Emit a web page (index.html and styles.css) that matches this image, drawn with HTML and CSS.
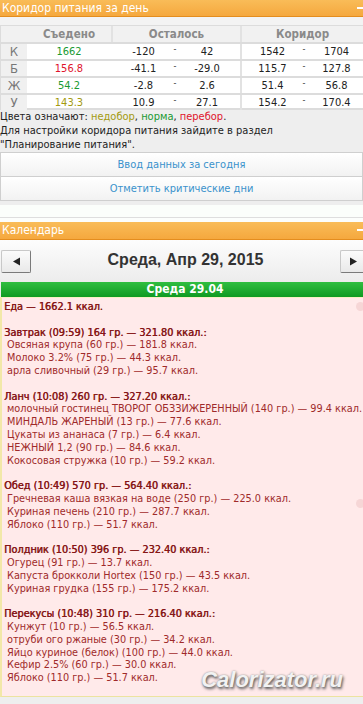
FILE: index.html
```html
<!DOCTYPE html>
<html lang="ru">
<head>
<meta charset="utf-8">
<title>Калоризатор</title>
<link rel="stylesheet" href="styles.css">
</head>
<body>
<div class="page">
  <section class="panel">
    <div class="bar"><span class="bar-title">Коридор питания за день</span><span class="min"></span></div>
    <div class="gap"></div>
    <div class="corr">
      <div class="row head"><span class="let"></span><span class="eat">Съедено</span><span class="grp sep">Осталось</span><span class="grp2 sep">Коридор</span></div>
      <div class="row"><span class="let">К</span><span class="eat ok">1662</span><span class="a">-120</span><span class="d">-</span><span class="b">42</span><span class="c sep">1542</span><span class="d">-</span><span class="f">1704</span></div>
      <div class="row"><span class="let">Б</span><span class="eat over">156.8</span><span class="a">-41.1</span><span class="d">-</span><span class="b">-29.0</span><span class="c sep">115.7</span><span class="d">-</span><span class="f">127.8</span></div>
      <div class="row"><span class="let">Ж</span><span class="eat ok">54.2</span><span class="a">-2.8</span><span class="d">-</span><span class="b">2.6</span><span class="c sep">51.4</span><span class="d">-</span><span class="f">56.8</span></div>
      <div class="row last"><span class="let">У</span><span class="eat under">143.3</span><span class="a">10.9</span><span class="d">-</span><span class="b">27.1</span><span class="c sep">154.2</span><span class="d">-</span><span class="f">170.4</span></div>
    </div>
    <p class="legend">Цвета означают: <span class="under">недобор</span>, <span class="ok">норма</span>, <span class="over">перебор</span>.<br>Для настройки коридора питания зайдите в раздел<br>"Планирование питания".</p>
    <a class="btn" href="#">Ввод данных за сегодня</a>
    <a class="btn second" href="#">Отметить критические дни</a>
    <div class="panel-foot"></div>
    <div class="panel-foot2"></div>
  </section>

  <section class="panel cal">
    <div class="bar cal-bar"><span class="bar-title">Календарь</span><span class="min"></span></div>
    <div class="nav">
      <button class="navbtn" type="button"><svg width="9" height="9" viewBox="0 0 9 9"><polygon points="1,4.5 8,0.5 8,8.5" fill="#222"/></svg></button>
      <div class="date">Среда, Апр 29, 2015</div>
      <button class="navbtn next" type="button"><svg width="9" height="9" viewBox="0 0 9 9"><polygon points="8,4.5 1,0.5 1,8.5" fill="#222"/></svg></button>
    </div>
    <div class="day">Среда 29.04</div>
    <div class="food">
      <span class="apple a1"></span>
      <span class="apple a2"></span>
      <div class="h">Еда — 1662.1 ккал.</div>
      <div class="blank"></div>
      <div class="h">Завтрак (09:59) 164 гр. — 321.80 ккал.:</div>
      <div class="i">Овсяная крупа (60 гр.) — 181.8 ккал.</div>
      <div class="i">Молоко 3.2% (75 гр.) — 44.3 ккал.</div>
      <div class="i">арла сливочный (29 гр.) — 95.7 ккал.</div>
      <div class="blank"></div>
      <div class="h">Ланч (10:08) 260 гр. — 327.20 ккал.:</div>
      <div class="i">молочный гостинец ТВОРОГ ОБЗЗИЖЕРЕННЫЙ (140 гр.) — 99.4 ккал.</div>
      <div class="i">МИНДАЛЬ ЖАРЕНЫЙ (13 гр.) — 77.6 ккал.</div>
      <div class="i">Цукаты из ананаса (7 гр.) — 6.4 ккал.</div>
      <div class="i">НЕЖНЫЙ 1,2 (90 гр.) — 84.6 ккал.</div>
      <div class="i">Кокосовая стружка (10 гр.) — 59.2 ккал.</div>
      <div class="blank"></div>
      <div class="h">Обед (10:49) 570 гр. — 564.40 ккал.:</div>
      <div class="i">Гречневая каша вязкая на воде (250 гр.) — 225.0 ккал.</div>
      <div class="i">Куриная печень (210 гр.) — 287.7 ккал.</div>
      <div class="i">Яблоко (110 гр.) — 51.7 ккал.</div>
      <div class="blank"></div>
      <div class="h">Полдник (10:50) 396 гр. — 232.40 ккал.:</div>
      <div class="i">Огурец (91 гр.) — 13.7 ккал.</div>
      <div class="i">Капуста брокколи Hortex (150 гр.) — 43.5 ккал.</div>
      <div class="i">Куриная грудка (155 гр.) — 175.2 ккал.</div>
      <div class="blank"></div>
      <div class="h">Перекусы (10:48) 310 гр. — 216.40 ккал.:</div>
      <div class="i">Кунжут (10 гр.) — 56.5 ккал.</div>
      <div class="i">отруби ого ржаные (30 гр.) — 34.2 ккал.</div>
      <div class="i">Яйцо куриное (белок) (100 гр.) — 44.0 ккал.</div>
      <div class="i">Кефир 2.5% (60 гр.) — 30.0 ккал.</div>
      <div class="i">Яблоко (110 гр.) — 51.7 ккал.</div>
      <div class="watermark">Calorizator.ru</div>
    </div>
  </section>
</div>
</body>
</html>
```

FILE: styles.css
```css
html, body {
  margin: 0;
  padding: 0;
}
body {
  background: #eeeeee;
  font-family: "DejaVu Sans Condensed", "DejaVu Sans", sans-serif;
  font-stretch: condensed;
  font-size: 11px;
  color: #222;
  width: 363px;
  height: 704px;
  overflow: hidden;
}
.page, .panel {
  display: block;
}
.bar {
  position: relative;
  height: 17px;
  line-height: 16px;
  background: linear-gradient(#f9bc58, #f5a83e);
  border-bottom: 1px solid #e48d1e;
  color: #fff;
  padding-left: 2px;
  font-size: 12px;
  overflow: hidden;
  box-sizing: border-box;
}
.cal-bar {
  height: 18px;
  line-height: 17px;
}
.min {
  position: absolute;
  right: -4px;
  top: 7px;
  width: 10px;
  height: 2px;
  background: #fff;
}
.gap {
  height: 8px;
  background: #f3f3f3;
}
.corr {
  display: flex;
  flex-direction: column;
}
.row {
  display: grid;
  grid-template-columns: 27px 84px 59px 10px 60px 58px 12px 53px;
  height: 17px;
  box-sizing: border-box;
  border-top: 2px solid #dcdcdc;
  background: #fff;
  text-align: center;
  line-height: 15px;
  white-space: nowrap;
}
.row.last {
  border-bottom: 2px solid #dcdcdc;
}
.row.head {
  border-top: 1px solid #dcdcdc;
  background: #f1f1f1;
  color: #8a8a8a;
  font-weight: bold;
  font-size: 11.5px;
  line-height: 16px;
  grid-template-columns: 27px 84px 129px 123px;
}
.row > span {
  display: block;
}
.let {
  background: #f0f0f0;
  color: #777;
  font-size: 13px;
  border-left: 1px solid #dcdcdc;
}
.head .let {
  background: transparent;
}
.sep {
  border-left: 2px solid #e2e2e2;
}
.a { padding-left: 6px; }
.b { padding-right: 6px; }
.c { padding-left: 5px; }
.d { color: #333; font-size: 9px; line-height: 11px; }
.ok { color: #1a9a32; }
.over { color: #e0142c; }
.under { color: #a39a10; }
.legend {
  margin: 0;
  line-height: 14px;
  color: #222;
}
.btn {
  display: block;
  height: 23px;
  line-height: 23px;
  text-align: center;
  color: #3a92cc;
  text-decoration: none;
  border: 1px solid #cfcfcf;
  background: linear-gradient(#ffffff, #f2f2f2);
}
.btn.second {
  border-top: none;
}
.panel-foot {
  margin-top: 4px;
  height: 12px;
  background: #fbfefb;
  border-bottom: 1px solid #dedede;
}
.panel-foot2 {
  height: 4px;
  background: #fcfefc;
}
.nav {
  height: 42px;
  display: flex;
  align-items: center;
  justify-content: space-between;
  background: linear-gradient(#fdfdfd, #ececec);
  overflow: hidden;
}
.navbtn {
  width: 30px;
  height: 23px;
  margin: 0 0 0 1px;
  padding: 0;
  display: flex;
  align-items: center;
  justify-content: center;
  border: 1px solid;
  border-color: #c8c8c8 #7a7a7a #7a7a7a #c8c8c8;
  border-radius: 2px;
  background: linear-gradient(#fbfbfb, #e9e9e9);
  flex: none;
}
.navbtn.next {
  margin: 0 -7px 0 0;
  justify-content: flex-start;
  padding-left: 8px;
}
.date {
  margin: 0 0 3px 0;
  font-family: "Liberation Sans", Arial, sans-serif;
  font-stretch: normal;
  font-size: 16px;
  line-height: 20px;
  font-weight: bold;
  color: #333;
}
.day {
  height: 15px;
  line-height: 15px;
  margin-left: 1px;
  background: linear-gradient(#30be40, #0f9a22);
  color: #fff;
  font-weight: bold;
  font-size: 12px;
  text-align: center;
  padding-left: 6px;
}
.food {
  position: relative;
  background: #ffeaea;
  border-left: 2px solid #f2e8a8;
  border-top: 1px solid #f6efc4;
  border-bottom: 1px solid #ece3a0;
  padding: 3px 0 11px 2px;
  font-size: 10.8px;
  line-height: 12.8px;
  color: #a02a2a;
  overflow: hidden;
  white-space: nowrap;
}
.food .h {
  color: #861616;
  text-shadow: 0.45px 0 0 #861616;
}
.food .i {
  padding-left: 3px;
}
.food .blank {
  height: 12.8px;
}
.apple {
  position: absolute;
  width: 9px;
  height: 9px;
  border-radius: 50%;
  background: #f6d6d6;
}
.a1 { right: -2px; top: 4px; }
.a2 { right: -2px; top: 201px; }
.watermark {
  position: absolute;
  right: 20px;
  bottom: 4px;
  font-family: "Liberation Sans", Arial, sans-serif;
  font-stretch: normal;
  font-style: italic;
  font-weight: bold;
  font-size: 22px;
  line-height: 24px;
  color: #f2f2f2;
  text-shadow: 1px 2px 3px #555, 0 0 2px #999;
}
```
